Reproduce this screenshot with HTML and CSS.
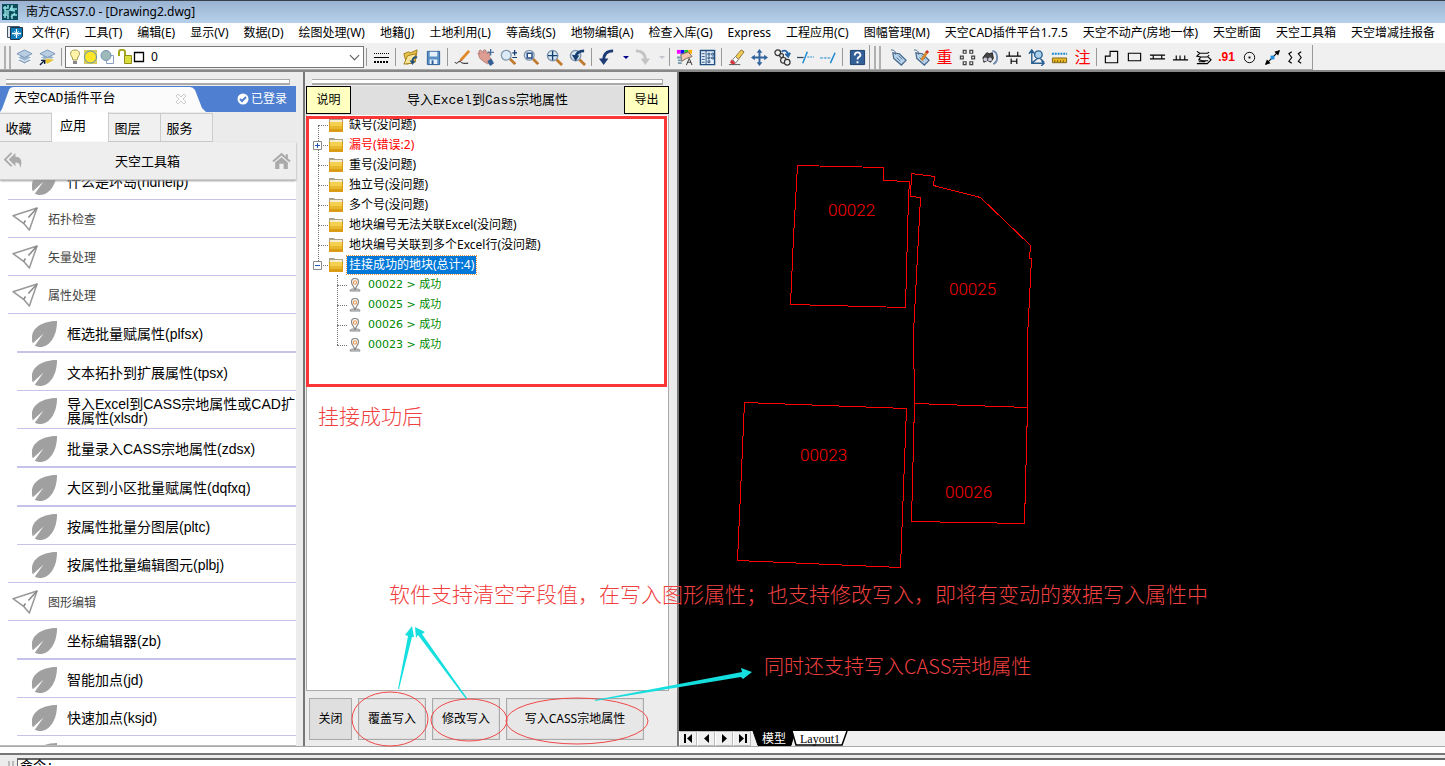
FILE: index.html
```html
<!DOCTYPE html>
<html lang="zh-CN">
<head>
<meta charset="utf-8">
<title>南方CASS7.0 - [Drawing2.dwg]</title>
<link rel="stylesheet" href="styles.css">
</head>
<body>
<svg class="defs" aria-hidden="true">
  <symbol id="leaf" viewBox="0 0 28 28"><path fill="#a0a0a0" d="M27 1C27 16 20 28 9 28 6 28 4 27 3 26 1 24 1 21 1 18 1 8 12 1 27 1z"/><path fill="#fff" d="M0 26 13 14 3 28z"/></symbol>
  <symbol id="plane" viewBox="0 0 28 26"><path fill="#fff" stroke="#999" stroke-width="1.6" stroke-linejoin="round" d="M1 9 26 1 18 24 12 17z"/><path fill="none" stroke="#888" stroke-width="1.6" d="M12 17 14 14M17 11 26 1"/></symbol>
  <symbol id="folder" viewBox="0 0 14 14"><path fill="#a9a08a" d="M0 0h5l1 1h8v5H0z"/><path fill="#f6efcf" d="M1 2h12v2H1z"/><path fill="#d99c12" d="M0 4h14v10H0z"/><path fill="#f3d050" d="M1 4h12v4H1z"/><path fill="#e8b92e" d="M1 8h12v3H1z"/></symbol>
  <symbol id="pin" viewBox="0 0 12 14"><path fill="#ddd" stroke="#888" d="M1 13c0-2 2-2 5-2s5 0 5 2z"/><path fill="#fff" stroke="#888" stroke-width="1.200" d="M6 12C5 8 2.500 7 2.500 4a3.500 3.500 0 0 1 7 0C9.500 7 7 8 6 12z"/><circle cx="6" cy="4.500" r="1.600" fill="#fff" stroke="#f0a060" stroke-width="1.200"/></symbol>
  <symbol id="layers" viewBox="0 0 18 18"><path fill="#8fa9c4" stroke="#fff" d="m1 12 8-4 8 4-8 4z"/><path fill="#9bb4ce" stroke="#fff" d="m1 9 8-4 8 4-8 4z"/><path fill="#b9cde2" stroke="#7898b8" d="m1 5 8-4 8 4-8 4z"/></symbol>
  <symbol id="lens" viewBox="0 0 18 18"><path stroke="#c07a30" stroke-width="3" d="m11 11 6 6"/><circle cx="7" cy="7" r="5.500" fill="#dceaf6" stroke="#8398ad" stroke-width="1.500"/></symbol>
  <symbol id="tag" viewBox="0 0 18 18"><path fill="#b8d3ea" stroke="#46688c" stroke-width="1.300" d="m3 4 7 1 7 7-5 5-8-7z"/><path stroke="#46688c" d="m7 9 4 4m-2-6 4 4"/><path fill="none" stroke="#46688c" d="M1 1c3 0 5 1 5 5"/></symbol>
</svg>

<div class="app">
  <header class="titlebar">
    <svg class="appicon" viewBox="0 0 16 16"><path fill="#0d4c5c" d="M0 0h16v16H0z"/><path fill="none" stroke="#8ee0e0" stroke-width="1.500" d="M1 4h5V1m4 0v4h5M1 11h5v4m4 0v-4h5M3 2v5h4m3-5-2 4 5 1M3 14V9h4m2 4 4-4"/></svg>
    <h1>南方CASS7.0 - [Drawing2.dwg]</h1>
  </header>

  <nav class="menubar">
    <svg class="docicon" viewBox="0 0 16 14"><path fill="#dde6ee" stroke="#456" d="M.5.5h12v11H.5z"/><path fill="#0878b8" stroke="#234" d="M3.500 1.500h12v9l-3 3h-9z"/><path stroke="#fff" stroke-width="1.300" d="M9.500 3v9M5 7.500h9"/><path stroke="#bfe2f5" stroke-width=".8" d="m7 5 5 5m0-5-5 5"/></svg>
    <button>文件(F)</button><button>工具(T)</button><button>编辑(E)</button><button>显示(V)</button><button>数据(D)</button><button>绘图处理(W)</button><button>地籍(J)</button><button>土地利用(L)</button><button>等高线(S)</button><button>地物编辑(A)</button><button>检查入库(G)</button><button>Express</button><button>工程应用(C)</button><button>图幅管理(M)</button><button>天空CAD插件平台1.7.5</button><button>天空不动产(房地一体)</button><button>天空断面</button><button>天空工具箱</button><button>天空增减挂报备</button>
  </nav>

  <div class="toolbars">
    <div class="toolbar">
      <span class="grip"></span>
      <button class="tool" aria-label="图层"><svg><use href="#layers"/></svg></button>
      <button class="tool" aria-label="上一图层"><svg viewBox="0 0 18 18"><use href="#layers" width="18" height="18"/><path fill="#e6c33a" stroke="#fff" stroke-width=".5" d="m3 12 6-2 8 1-8 5z"/><path stroke="#124" fill="none" stroke-width="1.500" d="m1 17 5-5m-4 0h4v4"/></svg></button>
      <span class="sep"></span>
      <div class="layerbox">
        <svg class="layerstate" viewBox="0 0 78 16"><path fill="#fff4a8" stroke="#a89850" d="M3 8C0 4 2 1 6 1s6 3 3 7l-1 3H4z"/><path fill="#888" d="M4 12h4v3H4z"/><path fill="#d8cc60" d="M15 1h13v14H15z"/><circle cx="21.500" cy="8" r="6" fill="#ffe528" stroke="#5a90b0"/><path fill="#fff" stroke="#8aa0c0" d="M37.500 6.500h7v8h-7z"/><circle cx="37" cy="6.500" r="5" fill="#9db9b8" stroke="#6f90b5"/><path fill="none" stroke="#a5a51a" stroke-width="2" d="M50 7V3c0-3 6-3 6 0v5"/><path fill="#d9dd3e" stroke="#8d8e1b" d="M55.500 6.500h7v8h-7z"/><path fill="#fff" stroke="#000" stroke-width="1.300" d="M65.500 3.500h9v9h-9z"/></svg>
        <select aria-label="当前图层"><option>0</option></select>
      </div>
      <span class="sep"></span>
      <button class="tool" aria-label="线型"><svg viewBox="0 0 17 17" shape-rendering="crispEdges"><path stroke="#000" stroke-dasharray="1 1" d="M1 4.500h15"/><path stroke="#000" d="M1 8.500h15"/><path stroke="#000" stroke-width="2" stroke-dasharray="2 1" d="M1 13h15"/></svg></button>
      <span class="sep"></span>
      <button class="tool" aria-label="打开"><svg viewBox="0 0 18 18"><path fill="#e9c348" stroke="#a27b18" d="m2 5 5-2 2 1 7-3-2 13-9 2z"/><path fill="#f8e498" stroke="#a27b18" d="m2 16 4-9 9-2-4 10z"/><path fill="none" stroke="#205080" stroke-width="2" d="M16 9c-3-1-5 1-5 4"/><path fill="#205080" d="m8 12 6 1-3 4z"/></svg></button>
      <button class="tool" aria-label="保存"><svg viewBox="0 0 18 18"><path fill="#5c91c8" stroke="#285d96" d="M2.500 2.500h13v14h-13z"/><path fill="#e6f1fa" d="M5 3h8v5H5zM5 11h8v5H5z"/><path fill="#285d96" d="M7 12h2v4H7z"/></svg></button>
      <span class="sep"></span>
      <button class="tool" aria-label="画线"><svg viewBox="0 0 18 18"><path fill="none" stroke="#000" d="M1 14c2 3 3-1 5-1s0 3 9 2"/><path stroke="#e08828" stroke-width="3" d="M7 12 16 2"/><path stroke="#633" d="m5 14 3-2"/></svg></button>
      <button class="tool" aria-label="平移"><svg viewBox="0 0 18 18"><path fill="#dd9d92" stroke="#a46962" stroke-width=".7" d="M1 4l2 1-1-3 2-1 3 3V1l2 0 2 4 1-2 2 1-1 4 3 4-4 4-4-2-5-4z"/><path fill="#335f92" d="m11 13 4-3 3 5-4 3z"/><path stroke="#335f92" stroke-width="1.200" d="M14.500 0v7M11 3.500h7"/></svg></button>
      <button class="tool" aria-label="缩放"><svg viewBox="0 0 18 18"><use href="#lens" width="17" height="17"/><path stroke="#123c70" stroke-width="1.300" d="M13 4h5m-2.500-3v6M13 9h5"/></svg></button>
      <button class="tool" aria-label="窗口缩放"><svg viewBox="0 0 18 18"><use href="#lens" width="17" height="17"/><path fill="#fff" stroke="#284e84" stroke-width="1.600" d="M4.500 4.500h5v5h-5z"/></svg></button>
      <button class="tool" aria-label="范围缩放"><svg viewBox="0 0 18 18"><use href="#lens" width="18" height="18"/><path stroke="#173f72" stroke-width="1.500" d="M7 2v10M2 7h10"/></svg></button>
      <button class="tool" aria-label="上一视图"><svg viewBox="0 0 18 18"><use href="#lens" width="18" height="18"/><path fill="none" stroke="#173f72" stroke-width="3" d="M7 8C8 4 11 2 16 2"/><path fill="#173f72" d="m3 6 8 1-4 6z"/></svg></button>
      <span class="sep"></span>
      <button class="tool" aria-label="撤销"><svg viewBox="0 0 18 18"><path fill="none" stroke="#1d3c74" stroke-width="3" d="M16 2C9 2 6 6 6 12"/><path fill="#1d3c74" d="M1 10h10l-5 7z"/></svg></button>
      <button class="drop" aria-label="撤销列表"><svg viewBox="0 0 9 18"><path fill="#00008b" d="M3 8h6L6 11z"/></svg></button>
      <button class="tool" aria-label="重做"><svg viewBox="0 0 18 18"><path fill="none" stroke="#c4c4c4" stroke-width="3" d="M2 2c7 0 10 4 10 10"/><path fill="#c4c4c4" d="M7 10h10l-5 7z"/></svg></button>
      <button class="drop" aria-label="重做列表"><svg viewBox="0 0 9 18"><path fill="#c4c4cc" d="M3 8h6L6 11z"/></svg></button>
      <span class="sep"></span>
      <button class="tool" aria-label="特性"><svg viewBox="0 0 18 18"><path fill="#f0f" d="M1 1h4v4H1z"/><path fill="#11f" d="M5 1h4v4H5z"/><path fill="#2c2" d="M9 1h4v4H9z"/><path fill="#fa0" d="M13 1h4v4h-4z"/><path fill="#f3c4ad" stroke="#765" d="m5 6 8-3 4 5-6 2-5 3z"/><path fill="#79a" d="M1 8h5v2H1zM2 11h4v2H2zM2 14h4v2H2z"/><path fill="none" stroke="#333" d="m11 17 3-7 3 7m-5-3h4"/></svg></button>
      <button class="tool" aria-label="设计中心"><svg viewBox="0 0 18 18"><path fill="#e6f1fb" stroke="#234e80" stroke-width="1.500" d="M1.500 1.500h15v15h-15z"/><path stroke="#234e80" d="M7.500 2v14M3 5h3M3 8h3M3 11h3M3 14h3"/><path fill="#fff" stroke="#234e80" d="M9.500 4.500h2v2h-2zM13.500 4.500h2v2h-2zM9.500 8.500h2v2h-2zM13.500 8.500h2v2h-2zM9.500 12.500h2v2h-2z"/></svg></button>
      <span class="sep"></span>
      <button class="tool" aria-label="删除"><svg viewBox="0 0 18 18"><path fill="#f0ce58" stroke="#8a6f25" d="m8 8 6-7 3 2-6 8z"/><path fill="#fff" stroke="#777" d="m5 11 3-3 3 3-3 4z"/><path fill="#d5343b" d="m4 11 4 4-3 2-3-3z"/><path stroke="#555" d="M1 16.500h12"/></svg></button>
      <button class="tool" aria-label="移动"><svg viewBox="0 0 18 18"><path stroke="#31649c" stroke-width="2" d="M9 3v12M3 9h12"/><path fill="#31649c" d="m9 0 3 4H6zM9 18l3-4H6zM0 9l4-3v6zM18 9l-4-3v6z"/></svg></button>
      <button class="tool" aria-label="复制"><svg viewBox="0 0 18 18"><g fill="#eee" stroke="#333" stroke-width="1.300"><circle cx="4" cy="4" r="3"/><circle cx="8" cy="7" r="2"/><circle cx="10" cy="12" r="3"/><circle cx="14" cy="14" r="3"/></g><path fill="none" stroke="#2867a6" stroke-width="2" d="M8 3c4-3 7 0 7 4m-3-2 3 3 2-4"/></svg></button>
      <button class="tool" aria-label="修剪"><svg viewBox="0 0 18 18"><path stroke="#345" stroke-width="1.300" d="M0 9h7"/><path stroke="#1686d0" stroke-width="1.500" d="M6 15 11 3"/><path stroke="#1686d0" stroke-dasharray="2 1" d="M11 8.500h7"/></svg></button>
      <button class="tool" aria-label="延伸"><svg viewBox="0 0 18 18"><path stroke="#1686d0" stroke-dasharray="3 1" d="M0 9.500h11"/><path stroke="#1686d0" stroke-width="1.500" d="m11 15 5-11"/></svg></button>
      <span class="sep"></span>
      <button class="tool" aria-label="帮助"><svg viewBox="0 0 18 18"><path fill="#315f96" stroke="#173d6d" d="M1.500 1.500h15v15h-15z"/><path fill="none" stroke="#fff" stroke-width="2" d="M6 7c0-5 7-4 6 0-1 2-3 1-3 4m0 2v2"/></svg></button>
    </div>
    <div class="toolbar survey">
      <span class="grip"></span>
      <button class="tool" aria-label="标签"><svg><use href="#tag"/></svg></button>
      <button class="tool" aria-label="编辑标签"><svg viewBox="0 0 18 18"><use href="#tag" width="18" height="18"/><path stroke="#d78a2c" stroke-width="3" d="m9 12 6-9"/><path stroke="#c33" stroke-width="3" d="m14 4 2-2"/></svg></button>
      <button class="tool glyph">重</button>
      <button class="tool" aria-label="点阵"><svg viewBox="0 0 18 18"><path fill="none" stroke="#444" stroke-width="1.300" d="M4.500 1.500h3v3h-3zM11.500 1.500h3v3h-3zM1.500 7.500h3v3h-3zM13.500 7.500h3v3h-3zM4.500 13.500h3v3h-3zM11.500 13.500h3v3h-3z"/></svg></button>
      <button class="tool" aria-label="查找"><svg viewBox="0 0 18 18"><path fill="#444" stroke="#222" d="m1 9 4-5 3 1 3-1 1 6-3 4-3-2-4 2z"/><circle cx="3.500" cy="11" r="2" fill="#ccd"/><circle cx="8.500" cy="11" r="2" fill="#ccd"/><path fill="none" stroke="#6c88ae" stroke-width="2" d="M11 2c6 1 7 11 1 14"/></svg></button>
      <button class="tool" aria-label="陡坎"><svg viewBox="0 0 18 18"><path fill="none" stroke="#000" stroke-width="1.200" d="M1 7.500h16M4.500 3v4M13.500 3v4M6.500 10v6m6-6v6m-6-3h6"/></svg></button>
      <button class="tool" aria-label="坐标查询"><svg viewBox="0 0 18 18"><path fill="none" stroke="#2b6092" stroke-width="1.500" d="M4 2v13h13M1 5l3-4 3 4m7 7 3 3-3 3M4 15l6-5m3 0 4 4"/><circle cx="11" cy="6" r="4" fill="#acd0eb" stroke="#2b6092" stroke-width="1.500"/></svg></button>
      <button class="tool" aria-label="距离"><svg viewBox="0 0 18 18"><path stroke="#1686d0" stroke-width="2" stroke-dasharray="2 1" d="M1 5h16"/><path fill="#e8b923" stroke="#806419" d="M1.500 9.500h15v5h-15z"/><path stroke="#6c5010" d="M4 12v2m3-2v2m3-2v2m3-2v2"/></svg></button>
      <button class="tool glyph">注</button>
      <span class="sep"></span>
      <button class="tool" aria-label="多点房屋"><svg viewBox="0 0 18 18"><path fill="none" stroke="#000" stroke-width="1.200" d="M2.500 14.500v-7h5v-5h8v12z"/></svg></button>
      <button class="tool" aria-label="四点房屋"><svg viewBox="0 0 18 18"><path fill="none" stroke="#000" stroke-width="1.200" d="M2.500 4.500h13v8h-13z"/></svg></button>
      <button class="tool" aria-label="依比例围墙"><svg viewBox="0 0 18 18"><path fill="none" stroke="#000" stroke-width="1.200" d="M1 6.500h16M1 10.500h16M4.500 6v4M13.500 6v4"/></svg></button>
      <button class="tool" aria-label="围墙"><svg viewBox="0 0 18 18"><path fill="none" stroke="#000" stroke-width="1.200" d="M1 11.500h16M4.500 7v4m4-4v4m5-4v4"/></svg></button>
      <button class="tool" aria-label="斜坡"><svg viewBox="0 0 18 18"><path fill="none" stroke="#000" stroke-width="1.200" d="M2 2.500 5 4.500h8l2-1M5 4.500 2 7.500l4 1h7l2-2M6 8.500l-2 3 4 1h6M14 8.500l3 3-4 4H2M4 13.500h7"/></svg></button>
      <button class="tool num">.91</button>
      <button class="tool" aria-label="控制点"><svg viewBox="0 0 18 18"><circle cx="9" cy="9" r="5.500" fill="none" stroke="#000"/><path d="M8 8h2v2H8z"/></svg></button>
      <button class="tool" aria-label="两点"><svg viewBox="0 0 18 18"><path stroke="#000" stroke-width="1.300" d="M2 16 16 2"/><path d="m17 1-2 6-4-4zM1 17l2-6 4 4z"/><path fill="#178be0" d="M7 7h4v4H7z"/></svg></button>
      <button class="tool" aria-label="曲线"><svg viewBox="0 0 18 18"><path fill="none" stroke="#000" stroke-width="1.200" d="M5 3 2 5l3 4-3 4 3 2M15 3l-3 2 3 4-3 4 3 2"/></svg></button>
    </div>
  </div>

  <main class="work">
    <aside class="plugin">
      <div class="palettegrip"></div>
      <div class="brand">
        <svg class="brandshape" viewBox="0 0 206 26" preserveAspectRatio="none"><path fill="#fbfbfb" d="M0 26 2 23 9 4Q10 1 14 1H190Q193 1 195 4L202 22 206 26z"/></svg>
        <h2>天空CAD插件平台</h2>
        <button class="close" aria-label="关闭标签"><svg viewBox="0 0 12 12"><path fill="#fff" stroke="#ccc" d="m1 3 2-2 3 3 3-3 2 2-3 3 3 3-2 2-3-3-3 3-2-2 3-3z"/></svg></button>
        <span class="login"><svg viewBox="0 0 12 12"><circle cx="6" cy="6" r="5.500" fill="#fff"/><path fill="none" stroke="#4f7fd0" stroke-width="2" d="m3 6 2 2 4-4"/></svg>已登录</span>
      </div>
      <div class="tabs"><button>收藏</button><button class="on">应用</button><button>图层</button><button>服务</button></div>
      <div class="crumb">
        <button aria-label="返回"><svg viewBox="0 0 20 18"><path fill="#aaa" d="M12 1v4c6 0 8 5 5 12 0-5-2-6-5-6v4L5 8z"/><path fill="none" stroke="#aaa" stroke-width="2" d="M8 1 1 8l7 7"/></svg></button>
        <h3>天空工具箱</h3>
        <button aria-label="主页"><svg viewBox="0 0 18 16"><path fill="none" stroke="#aaa" stroke-width="2" d="m1 9 8-7 8 7"/><path fill="#aaa" d="m3 10 6-5 6 5v6h-4v-5H7v5H3zM13 2h2v4l-2-1z"/></svg></button>
      </div>
      <ul class="list">
        <li class="leaf last first"><svg><use href="#leaf"/></svg><span>什么是环岛(hdhelp)</span></li>
        <li class="group"><svg><use href="#plane"/></svg><span>拓扑检查</span></li>
        <li class="group"><svg><use href="#plane"/></svg><span>矢量处理</span></li>
        <li class="group"><svg><use href="#plane"/></svg><span>属性处理</span></li>
        <li class="leaf thick"><svg><use href="#leaf"/></svg><span>框选批量赋属性(plfsx)</span></li>
        <li class="leaf"><svg><use href="#leaf"/></svg><span>文本拓扑到扩展属性(tpsx)</span></li>
        <li class="leaf"><svg><use href="#leaf"/></svg><span>导入Excel到CASS宗地属性或CAD扩展属性(xlsdr)</span></li>
        <li class="leaf thick"><svg><use href="#leaf"/></svg><span>批量录入CASS宗地属性(zdsx)</span></li>
        <li class="leaf thick"><svg><use href="#leaf"/></svg><span>大区到小区批量赋属性(dqfxq)</span></li>
        <li class="leaf"><svg><use href="#leaf"/></svg><span>按属性批量分图层(pltc)</span></li>
        <li class="leaf last"><svg><use href="#leaf"/></svg><span>按属性批量编辑图元(plbj)</span></li>
        <li class="group"><svg><use href="#plane"/></svg><span>图形编辑</span></li>
        <li class="leaf thick"><svg><use href="#leaf"/></svg><span>坐标编辑器(zb)</span></li>
        <li class="leaf"><svg><use href="#leaf"/></svg><span>智能加点(jd)</span></li>
        <li class="leaf"><svg><use href="#leaf"/></svg><span>快速加点(ksjd)</span></li>
        <li class="leaf"><svg><use href="#leaf"/></svg></li>
      </ul>
    </aside>

    <section class="import">
      <div class="palettegrip"></div>
      <div class="importhead"><button>说明</button><h2>导入Excel到Cass宗地属性</h2><button>导出</button></div>
      <div class="result">
        <ul class="tree">
          <li><svg><use href="#folder"/></svg><span>缺号(没问题)</span></li>
          <li class="error"><button class="toggle" aria-label="展开"><svg viewBox="0 0 9 9"><path fill="#fff" stroke="#888" d="M.5.5h8v8h-8z"/><path stroke="#245ab0" d="M2 4.500h5M4.500 2v5"/></svg></button><svg><use href="#folder"/></svg><span>漏号(错误:2)</span></li>
          <li><svg><use href="#folder"/></svg><span>重号(没问题)</span></li>
          <li><svg><use href="#folder"/></svg><span>独立号(没问题)</span></li>
          <li><svg><use href="#folder"/></svg><span>多个号(没问题)</span></li>
          <li><svg><use href="#folder"/></svg><span>地块编号无法关联Excel(没问题)</span></li>
          <li><svg><use href="#folder"/></svg><span>地块编号关联到多个Excel行(没问题)</span></li>
          <li><button class="toggle" aria-label="折叠"><svg viewBox="0 0 9 9"><path fill="#fff" stroke="#888" d="M.5.5h8v8h-8z"/><path stroke="#245ab0" d="M2 4.500h5"/></svg></button><svg><use href="#folder"/></svg><span class="selected">挂接成功的地块(总计:4)</span></li>
        </ul>
        <ul class="tree children">
          <li><svg><use href="#pin"/></svg><span>00022 &gt; 成功</span></li>
          <li><svg><use href="#pin"/></svg><span>00025 &gt; 成功</span></li>
          <li><svg><use href="#pin"/></svg><span>00026 &gt; 成功</span></li>
          <li><svg><use href="#pin"/></svg><span>00023 &gt; 成功</span></li>
        </ul>
      </div>
      <div class="actions"><button class="shut">关闭</button><button class="write">覆盖写入</button><button class="write">修改写入</button><button class="cass">写入CASS宗地属性</button></div>
    </section>

    <section class="drawing">
      <svg class="canvas">
        <g transform="translate(-679 -72)" fill="none" stroke="#f00" shape-rendering="crispEdges">
          <path d="M797.500 165.500 883.500 167.500V180.500L909.500 181.500 908.500 197.500 905.500 307.500 790.500 304.500 793.500 237.500z"/>
          <path d="M911.500 173.500 934.500 176.500 933.500 185.500 980.500 197.500 1030.500 245.500 1029.500 258.500H1031.500L1027.500 337.500V407.500L1024.500 523.500 911.500 521.500 914.500 403.500 913.500 333.500 920.500 197.500 910.500 196.500z"/>
          <path d="M914.500 403.500 1027.500 407.500M744.500 402.500 906.500 408.500 900.500 567.500 737.500 560.500z"/>
        </g>
        <g class="plot" transform="translate(-679 -72)"><text x="828" y="216">00022</text><text x="949" y="295">00025</text><text x="800" y="461">00023</text><text x="945" y="498">00026</text></g>
      </svg>
      <div class="sheets">
        <button class="nav" aria-label="第一页"><svg viewBox="0 0 9 9"><path d="M0 0h2v9H0zM8 0v9L3 4.500z"/></svg></button>
        <button class="nav" aria-label="上一页"><svg viewBox="0 0 9 9"><path d="M7 0v9L2 4.500z"/></svg></button>
        <button class="nav" aria-label="下一页"><svg viewBox="0 0 9 9"><path d="M2 0v9l5-4.500z"/></svg></button>
        <button class="nav" aria-label="最后一页"><svg viewBox="0 0 9 9"><path d="M1 0v9l5-4.500zM7 0h2v9H7z"/></svg></button>
        <button class="sheet model"><svg viewBox="0 0 44 15" preserveAspectRatio="none"><path stroke="#000" d="M1 0h42l-4 14.500H6z"/></svg><span>模型</span></button>
        <button class="sheet layout"><svg viewBox="0 0 56 15" preserveAspectRatio="none"><path fill="#fff" stroke="#000" stroke-width="1.500" d="M0 0 4 14H50L55 0"/></svg><span>Layout1</span></button>
      </div>
    </section>
  </main>

  <footer class="command"><span class="cmdgrip"></span><div class="cmdbox">命令:</div></footer>
</div>

<div class="notes">
  <div class="frame"></div>
  <p class="note linked">挂接成功后</p>
  <p class="note fields">软件支持清空字段值，在写入图形属性；也支持修改写入，即将有变动的数据写入属性中</p>
  <p class="note also">同时还支持写入CASS宗地属性</p>
  <svg class="marks">
    <g fill="none" stroke="#f04848"><ellipse cx="390" cy="719" rx="38" ry="27"/><ellipse cx="469" cy="720" rx="38" ry="21"/><ellipse cx="577" cy="721" rx="71" ry="23"/></g>
    <g fill="#15dede"><path d="M398 689 408 636 405 635 412 626 414 637 412 637 399 689z"/><path d="M466 699 418 635 416 638 415 627 425 632 422 634 467 698z"/><path d="M595 701 741 677 743 679 752 672 741 668 742 672 595 700z"/></g>
  </svg>
</div>
</body>
</html>
```
FILE: styles.css
```css
* { box-sizing: border-box; }
body { margin: 0; overflow: hidden; font: 12px/16px "Noto Sans", "Noto Sans CJK SC", sans-serif; color: #000; background: #ececec; }
h1, h2, h3, p, ul { margin: 0; padding: 0; font-weight: 400; list-style: none; }
button { margin: 0; padding: 0; border: 0; background: none; font: inherit; color: inherit; white-space: nowrap; }
svg { display: block; flex: none; }
.defs { position: absolute; width: 0; height: 0; }
.app { display: flex; flex-direction: column; height: 100vh; min-height: 500px; }

.titlebar { display: flex; align-items: center; gap: 8px; flex: none; height: 23px; padding-left: 2px; border-top: 1px solid #39404a; background: linear-gradient(#9ab3d2, #b7d0ea); }
.titlebar h1 { font-size: 12px; }
.appicon { width: 16px; height: 16px; }
.menubar { display: flex; align-items: center; gap: 15px; flex: none; height: 20px; padding-left: 7px; background: #fff; }
.docicon { width: 16px; height: 14px; margin-right: -6px; }

.toolbars { display: flex; flex: none; height: 29px; padding-top: 2px; background: #f0f0f0; border-bottom: 2px solid #888; }
.toolbar { display: flex; align-items: center; padding-left: 4px; border-right: 1px solid #999; border-bottom: 1px solid #aaa; }
.survey { padding-right: 5px; }
.grip { width: 7px; height: 23px; margin-right: 2px; border: solid #b0b0b0; border-width: 0 2px; }
.survey .grip { margin-right: 6px; }
.sep { width: 1px; height: 18px; margin: 0 3px 0 2px; background: #999; }
.tool { display: grid; place-items: center; width: 23px; height: 22px; }
.tool svg { width: 17px; height: 17px; }
.drop { width: 13px; }
.drop svg { width: 9px; height: 18px; margin-left: 2px; }
.glyph { color: #f00; font-size: 16px; }
.num { color: #f00; font: 700 12px/16px "Liberation Sans", sans-serif; }
.layerbox { display: flex; align-items: center; width: 299px; height: 22px; padding: 0 3px; border: 1px solid #777; background: #fff; }
.layerstate { width: 78px; height: 16px; }
.layerbox select { flex: 1; height: 20px; padding: 0 0 0 4px; border: 0; font: inherit; appearance: none; background: #fff; }
.layerbox::after { content: ""; width: 6px; height: 6px; margin: -4px 2px 0 0; border: solid #555; border-width: 0 1px 1px 0; transform: rotate(45deg); }

.work { display: flex; flex: 1; min-height: 0; }
.palettegrip { flex: none; height: 6px; margin: 7px 6px 1px; border: 1px solid #aaa; border-left: 0; border-bottom: 2px solid #aaa; background: #fff; }
.plugin { display: flex; flex-direction: column; width: 296px; margin-right: 7px; border-bottom: 1px solid #bbb; }
.brand { position: relative; display: flex; align-items: center; flex: none; height: 26px; padding: 0 9px 0 14px; background: #4f7fd0; font-size: 12px; }
.brandshape { position: absolute; left: 0; top: 0; width: 206px; height: 26px; }
.brand h2 { position: relative; width: 161px; font: 13px/16px "Liberation Mono", "Noto Sans CJK SC", monospace; }
.close { position: relative; }
.close svg, .login svg { width: 12px; height: 12px; }
.login { display: flex; align-items: center; gap: 2px; margin-left: auto; color: #fff; }
.tabs { display: flex; align-items: flex-end; flex: none; height: 30px; background: #ebebeb; font-size: 13px; }
.tabs button { width: 52px; height: 29px; padding-right: 14px; border: 1px solid #ccc; border-left: 0; background: #f0f0f0; }
.tabs .on { width: 57px; height: 30px; padding-bottom: 4px; border-width: 0 1px 0 0; background: #fff; }
.crumb { position: relative; display: flex; align-items: center; justify-content: space-between; flex: none; height: 38px; padding: 0 5px 0 4px; background: #eee; border-bottom: 1px solid #ccc; box-shadow: 0 1px 2px #999; z-index: 1; }
.crumb h3 { font-size: 13px; }
.crumb svg { width: 19px; height: 17px; }
.list { flex: 1; min-height: 0; overflow: hidden; background: #fff; font: 14px/14px "Liberation Sans", "Noto Sans CJK SC", sans-serif; }
.list li { display: flex; align-items: center; height: 38px; padding-top: 2px; border-bottom: 1px solid #c5c3ea; }
.list .first { margin-top: -18px; }
.group { gap: 9px; margin-left: 8px; padding-left: 4px; color: #444; font-size: 12px; }
.group svg { width: 27px; height: 25px; }
.leaf { gap: 9px; margin-left: 17px; padding-left: 14px; }
.list .last { margin-left: 8px; padding-left: 23px; }
.list .thick { height: 39px; border-bottom-width: 2px; }
.leaf svg { width: 27px; height: 27px; }

.import { display: flex; flex-direction: column; width: 376px; padding: 0 8px 0 1px; border: solid #777; border-width: 0 2px; background: #ececec; }
.importhead { display: flex; flex: none; height: 29px; background: #dfdfdf; }
.importhead button { width: 45px; height: 28px; border: 1px solid #000; background: #ffffc0; }
.importhead h2 { flex: 1; text-align: center; font: 12px/30px "Liberation Mono", "Noto Sans CJK SC", monospace; }
.importhead h2 { font-size: 13px; }
.result { flex: 1; min-height: 0; overflow: hidden; border: 1px solid #aaa; border-top: 0; background: #fff; }
.tree { margin-left: 11px; position: relative; }
.tree li { position: relative; display: flex; align-items: center; gap: 4px; height: 20px; padding-left: 11px; }
.tree li > svg { width: 14px; height: 14px; }
.tree li::before { content: ""; position: absolute; left: 0; top: 10px; width: 10px; border-top: 1px dotted #777; }
.tree::before { content: ""; position: absolute; left: 0; top: 10px; bottom: 10px; border-left: 1px dotted #777; }
.toggle { position: absolute; left: -5px; top: 6px; }
.toggle svg { width: 9px; height: 9px; }
.tree span { padding: 1px 2px; }
.tree .selected { color: #fff; background: #0078d7; outline: 1px dotted #e89040; }
.error { color: #f00; }
.children { margin-left: 30px; color: #080; font: 11px/16px "DejaVu Sans", "Noto Sans CJK SC", sans-serif; }
.children::before { top: 0; }
.actions { display: flex; flex: none; gap: 6px; height: 55px; padding: 7px 3px; }
.actions button { height: 42px; border: 1px solid #aaa; background: #e7e7e7; box-shadow: inset 0 0 0 1px #ddd; }
.actions .shut { width: 43px; background: #dfdfdf; }
.actions .write { width: 68px; }
.actions .cass { width: 138px; }

.drawing { display: flex; flex-direction: column; flex: 1; min-width: 0; background: #000; }
.canvas { flex: 1; width: 100%; min-height: 0; }
.plot { fill: #f00; font: 300 17px "Roboto", sans-serif; }
.sheets { display: flex; flex: none; height: 15px; background: #f0f0f0; }
.nav { display: grid; place-items: center; width: 18px; border: 1px solid #bbb; border-left-color: #fff; }
.nav svg { width: 9px; height: 9px; }
.sheet { position: relative; height: 15px; font: 12px/14px "Liberation Serif", "Noto Sans CJK SC", serif; }
.sheet svg { position: absolute; inset: 0; width: 100%; height: 100%; }
.sheet span { position: relative; }
.model { width: 44px; margin-left: 1px; color: #fff; }
.layout { width: 56px; margin-left: -4px; }

.command { display: flex; flex: none; height: 20px; padding-top: 5px; border-top: 1px solid #aaa; background: linear-gradient(#fff 6px, #777 6px, #777 8px, #ececec 8px); }
.cmdgrip { width: 6px; margin: 9px 3px 0 8px; border: solid #bbb; border-width: 0 2px; }
.cmdbox { flex: 1; height: 20px; margin-top: 6px; padding-left: 2px; border: solid #666; border-width: 2px 0 0 1px; background: #fff; font: 13px/14px "Liberation Mono", "Noto Sans CJK SC", monospace; }

.notes { position: absolute; inset: 0; overflow: hidden; pointer-events: none; }
.frame { position: absolute; left: 306px; top: 116px; width: 361px; height: 271px; border: 3px solid #fb3636; }
.note { position: absolute; color: #f04040; font: 300 21px/28px "Noto Sans CJK SC", sans-serif; white-space: nowrap; }
.linked { left: 318px; top: 401px; }
.fields { left: 389px; top: 579px; }
.also { left: 764px; top: 652px; font-size: 20px; }
.marks { position: absolute; inset: 0; width: 100%; height: 100%; }
```
